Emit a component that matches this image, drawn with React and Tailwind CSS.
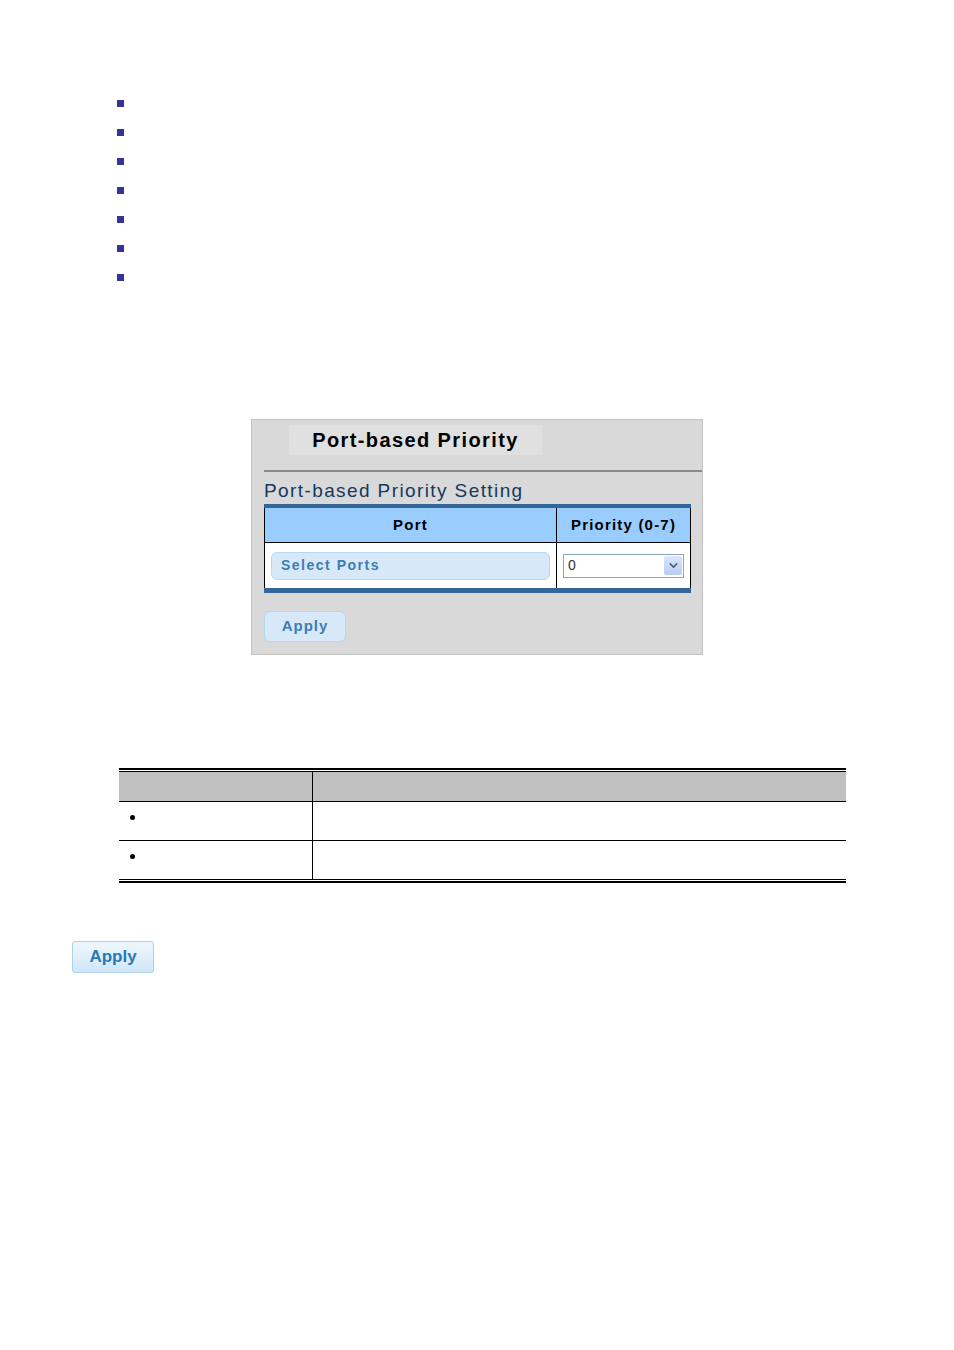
import { ChevronDown } from "lucide-react";

const bulletCount = 7;

function PanelButton({ children, className }) {
  return (
    <button
      type="button"
      className={
        "rounded-[6px] border border-[#b9d7ef] bg-[#d7e9f8] font-bold text-[#3b7db4] " +
        className
      }
    >
      {children}
    </button>
  );
}

function PriorityPanel() {
  return (
    <section className="ml-[251px] mt-[138px] h-[236px] w-[452px] border border-[#c3c3c3] bg-[#d9d9d9] font-['Liberation_Sans',Arial,sans-serif]">
      <div className="ml-[37px] mt-[5px] flex h-[30px] w-[253px] items-center justify-center bg-[#e0e0e0] text-[20px] font-bold tracking-[1.4px] text-black">
        Port-based Priority
      </div>

      <div className="ml-[12px] mt-[15px] h-[2px] bg-[#8c8c8c]" />

      <h2 className="ml-[12px] mt-[6px] h-[26px] text-[19px] leading-[26px] tracking-[1.4px] text-[#15385e]">
        Port-based Priority Setting
      </h2>

      <div className="ml-[12px] w-[427px]">
        <div className="h-[4px] bg-[#336699]" />
        <div className="grid grid-cols-[292px_1fr] border-x border-black">
          <div className="flex h-[35px] items-center justify-center border-b border-r border-black bg-[#99ccff] text-[15px] font-bold tracking-[1.3px] text-black">
            Port
          </div>
          <div className="flex h-[35px] items-center justify-center border-b border-black bg-[#99ccff] text-[15px] font-bold tracking-[1.2px] text-black">
            Priority (0-7)
          </div>
          <div className="flex h-[45px] items-center border-r border-black bg-white pl-[6px]">
            <PanelButton className="flex h-[28px] w-[279px] items-center pl-[9px] text-[14px] tracking-[1.5px]">
              Select Ports
            </PanelButton>
          </div>
          <div className="flex h-[45px] items-center bg-white pl-[6px]">
            <div className="flex h-[24px] w-[121px] items-center justify-between border border-[#8aa6c1] bg-white pl-[4px] pr-[1px] text-[14px] text-[#333]">
              <span>0</span>
              <span className="flex h-[19px] w-[18px] items-center justify-center rounded-[2px] bg-gradient-to-b from-[#dbe6fb] to-[#b8ccf2]">
                <ChevronDown size={13} strokeWidth={3} color="#4d6185" />
              </span>
            </div>
          </div>
        </div>
        <div className="h-[5px] bg-[#336699]" />
      </div>

      <PanelButton className="ml-[12px] mt-[18px] h-[31px] w-[82px] text-[15px] tracking-[1px]">
        Apply
      </PanelButton>
    </section>
  );
}

function DescriptionTable() {
  const rows = [0, 1];

  return (
    <div className="ml-[119px] mt-[113px] w-[727px]">
      <div className="h-[2px] bg-black" />
      <div className="mt-[1px] h-[1px] bg-black" />
      <div className="grid grid-cols-[194px_1fr]">
        <div className="h-[29px] border-r border-black bg-[#c0c0c0]" />
        <div className="h-[29px] bg-[#c0c0c0]" />
        {rows.map((row) => (
          <div key={row} className="contents">
            <div className="h-[39px] border-r border-t border-black pl-[11px] pt-[13px]">
              <span className="block h-[5px] w-[5px] rounded-full bg-black" />
            </div>
            <div className="h-[39px] border-t border-black" />
          </div>
        ))}
      </div>
      <div className="h-[1px] bg-black" />
      <div className="mt-[1px] h-[2px] bg-black" />
    </div>
  );
}

export default function App() {
  return (
    <div className="h-[1350px] w-[954px] overflow-hidden bg-white">
      <ul className="flex flex-col gap-[22px] pl-[117px] pt-[100px]">
        {Array.from({ length: bulletCount }, (_, index) => (
          <li key={index} className="h-[7px] w-[7px] bg-[#333399]" />
        ))}
      </ul>

      <PriorityPanel />

      <DescriptionTable />

      <button
        type="button"
        className="ml-[72px] mt-[58px] flex h-[32px] w-[82px] items-center justify-center rounded-[3px] border border-[#b0d0ea] bg-gradient-to-b from-[#eef7fe] via-[#e0effb] to-[#cfe5f6] font-['Liberation_Sans',Arial,sans-serif] text-[17px] font-bold text-[#2a78b4]"
      >
        Apply
      </button>
    </div>
  );
}
